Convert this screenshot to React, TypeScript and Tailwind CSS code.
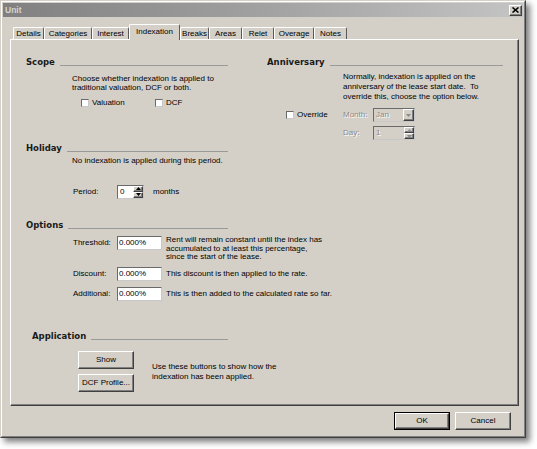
import React from 'react';

const BODY = "font-['Liberation_Sans',Arial,sans-serif] text-[8px] text-black";

const raised =
  'bg-[#d4d0c8] border border-t-white border-l-white border-r-[#404040] border-b-[#404040] shadow-[inset_-1px_-1px_0_#808080]';
const sunken =
  'border border-t-[#6a6a6a] border-l-[#6a6a6a] border-r-[#c8c8c8] border-b-[#c8c8c8]';
const disabledText = 'text-[#8a8a8a] [text-shadow:1px_1px_0_#ffffff]';

const Tri: React.FC<{ up?: boolean; color?: string }> = ({ up, color = '#000' }) => (
  <svg width="5" height="3" viewBox="0 0 5 3">
    <path d={up ? 'M2.5 0L5 3H0Z' : 'M0 0H5L2.5 3Z'} fill={color} />
  </svg>
);

const Heading: React.FC<{ label: string; className?: string }> = ({ label, className = '' }) => (
  <div className={`flex items-end h-[11px] ${className}`}>
    <span className="font-['DejaVu_Sans',Verdana,sans-serif] font-bold text-[8.5px] leading-[11px] text-[#1a1a1a]">
      {label}
    </span>
    <div className="flex-1 ml-[5px] mb-[2px] border-t border-[#9a9a9a]" />
  </div>
);

const Checkbox: React.FC<{ label: string }> = ({ label }) => (
  <div className="flex items-center">
    <span className={`w-[8px] h-[8px] bg-white shrink-0 ${sunken}`} />
    <span className="ml-[3px]">{label}</span>
  </div>
);

const Field: React.FC<{ value: string }> = ({ value }) => (
  <div className={`w-[45px] h-[14px] bg-white flex items-center pl-[1px] shrink-0 ${sunken}`}>{value}</div>
);

const Spin: React.FC<{ value: string; disabled?: boolean; w: string }> = ({ value, disabled, w }) => (
  <div
    className={`${w} h-[14px] flex items-stretch shrink-0 ${sunken} ${disabled ? 'bg-[#d4d0c8]' : 'bg-white'}`}
  >
    <span className={`flex-1 flex items-center pl-[2px] ${disabled ? disabledText : ''}`}>{value}</span>
    <div className="w-[10px] flex flex-col">
      <div className={`flex-1 flex items-center justify-center ${raised}`}>
        <Tri up color={disabled ? '#8a8a8a' : '#000'} />
      </div>
      <div className={`flex-1 flex items-center justify-center ${raised}`}>
        <Tri color={disabled ? '#8a8a8a' : '#000'} />
      </div>
    </div>
  </div>
);

const Button: React.FC<{ label: string }> = ({ label }) => (
  <div className={`w-[56px] h-[18px] flex items-center justify-center ${raised}`}>{label}</div>
);

const tabs: { name: string; w: string; active?: boolean }[] = [
  { name: 'Details', w: 'w-[31px]' },
  { name: 'Categories', w: 'w-[48px]' },
  { name: 'Interest', w: 'w-[37px]' },
  { name: 'Indexation', w: 'w-[51px]', active: true },
  { name: 'Breaks', w: 'w-[29px]' },
  { name: 'Areas', w: 'w-[33px]' },
  { name: 'Relet', w: 'w-[32px]' },
  { name: 'Overage', w: 'w-[40px]' },
  { name: 'Notes', w: 'w-[33px]' },
];

const App: React.FC = () => {
  return (
    <div className={`w-[537px] h-[449px] bg-white ${BODY}`}>
      {/* Dialog window */}
      <div className="w-[526px] h-[438px] bg-[#d4d0c8] border border-t-[#d4d0c8] border-l-[#d4d0c8] border-r-[#404040] border-b-[#404040] shadow-[4px_4px_6px_rgba(0,0,0,0.5)]">
        <div className="h-full border border-t-white border-l-white border-r-[#808080] border-b-[#808080]">
          {/* Title bar */}
          <div className="ml-[1px] mt-[1px] w-[520px] h-[14px] bg-linear-to-r from-[#808080] to-[#c4c4c4] flex items-center justify-between">
            <span className="ml-[2px] font-['Liberation_Sans',Arial,sans-serif] font-bold text-[8.5px] text-[#d8d4cc]">
              Unit
            </span>
            <div className={`w-[13px] h-[11px] mr-[1px] flex items-center justify-center ${raised}`}>
              <svg width="7" height="6" viewBox="0 0 7 6">
                <path d="M0.5 0.5L6.5 5.5M6.5 0.5L0.5 5.5" stroke="#000" strokeWidth="1.6" />
              </svg>
            </div>
          </div>

          {/* Tabs */}
          <div className="mt-[7px] ml-[11px] h-[15px] flex items-end">
            {tabs.map(t => (
              <div
                key={t.name}
                className={`${t.w} flex items-center justify-center rounded-t-[2px] border-t border-l border-r border-t-white border-l-white border-r-[#5a5a5a] bg-[#d4d0c8] ${
                  t.active ? 'h-[16px] -mb-[1px] relative z-10 pb-[2px]' : 'h-[12px]'
                }`}
              >
                {t.name}
              </div>
            ))}
          </div>

          {/* Tab page */}
          <div className="ml-[8px] w-[509px] h-[367px] border-t border-l border-r border-b border-t-white border-l-white border-r-[#404040] border-b-[#404040]">
            <div className="h-full border-r border-b border-[#808080] pl-[15px] pt-[17px] flex flex-col">
              <div className="flex">
                {/* Scope + Holiday */}
                <div className="w-[202px] flex flex-col">
                  <Heading label="Scope" />
                  <div className="ml-[46px] mt-[6px] leading-[9px]">
                    Choose whether indexation is applied to
                    <br />
                    traditional valuation, DCF or both.
                  </div>
                  <div className="ml-[55px] mt-[6px] h-[10px] flex items-center">
                    <div className="w-[74px]">
                      <Checkbox label="Valuation" />
                    </div>
                    <Checkbox label="DCF" />
                  </div>

                  <Heading label="Holiday" className="mt-[35px]" />
                  <div className="ml-[46px] mt-[2px] leading-[9px]">No indexation is applied during this period.</div>
                  <div className="ml-[47px] mt-[19px] h-[15px] flex items-center">
                    <span className="w-[44px]">Period:</span>
                    <Spin value="0" w="w-[27px]" />
                    <span className="ml-[9px]">months</span>
                  </div>
                </div>

                {/* Anniversary */}
                <div className="ml-[39px] w-[236px] flex flex-col">
                  <Heading label="Anniversary" />
                  <div className="ml-[76px] mt-[4px] leading-[10px]">
                    Normally, indexation is applied on the
                    <br />
                    anniversary of the lease start date.&nbsp; To
                    <br />
                    override this, choose the option below.
                  </div>
                  <div className="mt-[6px] flex">
                    <div className="w-[76px] h-[14px] pl-[19px] flex items-center">
                      <Checkbox label="Override" />
                    </div>
                    <div className="flex flex-col gap-[4px]">
                      <div className="h-[14px] flex items-center">
                        <span className={`w-[30px] ${disabledText}`}>Month:</span>
                        <div className={`w-[42px] h-[14px] bg-[#d4d0c8] flex items-stretch ${sunken}`}>
                          <span className={`flex-1 flex items-center pl-[2px] ${disabledText}`}>Jan</span>
                          <div className={`w-[11px] flex items-center justify-center ${raised}`}>
                            <Tri color="#8a8a8a" />
                          </div>
                        </div>
                      </div>
                      <div className="h-[14px] flex items-center">
                        <span className={`w-[30px] ${disabledText}`}>Day:</span>
                        <Spin value="1" disabled w="w-[42px]" />
                      </div>
                    </div>
                  </div>
                </div>
              </div>

              {/* Options */}
              <Heading label="Options" className="w-[202px] mt-[21px]" />
              <div className="ml-[47px] mt-[5px] flex flex-col">
                <div className="h-[31px] flex items-start">
                  <span className="w-[44px] h-[14px] flex items-center">Threshold:</span>
                  <Field value="0.000%" />
                  <div className="ml-[4px] leading-[8.5px]">
                    Rent will remain constant until the index has
                    <br />
                    accumulated to at least this percentage,
                    <br />
                    since the start of the lease.
                  </div>
                </div>
                <div className="h-[20px] flex items-start">
                  <span className="w-[44px] h-[14px] flex items-center">Discount:</span>
                  <Field value="0.000%" />
                  <span className="ml-[4px] h-[14px] flex items-center">This discount is then applied to the rate.</span>
                </div>
                <div className="h-[14px] flex items-start">
                  <span className="w-[44px] h-[14px] flex items-center">Additional:</span>
                  <Field value="0.000%" />
                  <span className="ml-[4px] h-[14px] flex items-center">
                    This is then added to the calculated rate so far.
                  </span>
                </div>
              </div>

              {/* Application */}
              <Heading label="Application" className="w-[196px] ml-[6px] mt-[30px]" />
              <div className="ml-[52px] mt-[9px] flex items-start">
                <div className="flex flex-col gap-[5px]">
                  <Button label="Show" />
                  <Button label="DCF Profile..." />
                </div>
                <div className="ml-[18px] mt-[11px] leading-[9.5px]">
                  Use these buttons to show how the
                  <br />
                  indexation has been applied.
                </div>
              </div>
            </div>
          </div>

          {/* Dialog buttons */}
          <div className="mt-[6px] pr-[13px] flex justify-end gap-[5px]">
            <div className="border border-black">
              <div className={`w-[54px] h-[16px] flex items-center justify-center ${raised}`}>OK</div>
            </div>
            <Button label="Cancel" />
          </div>
        </div>
      </div>
    </div>
  );
};

export default App;
